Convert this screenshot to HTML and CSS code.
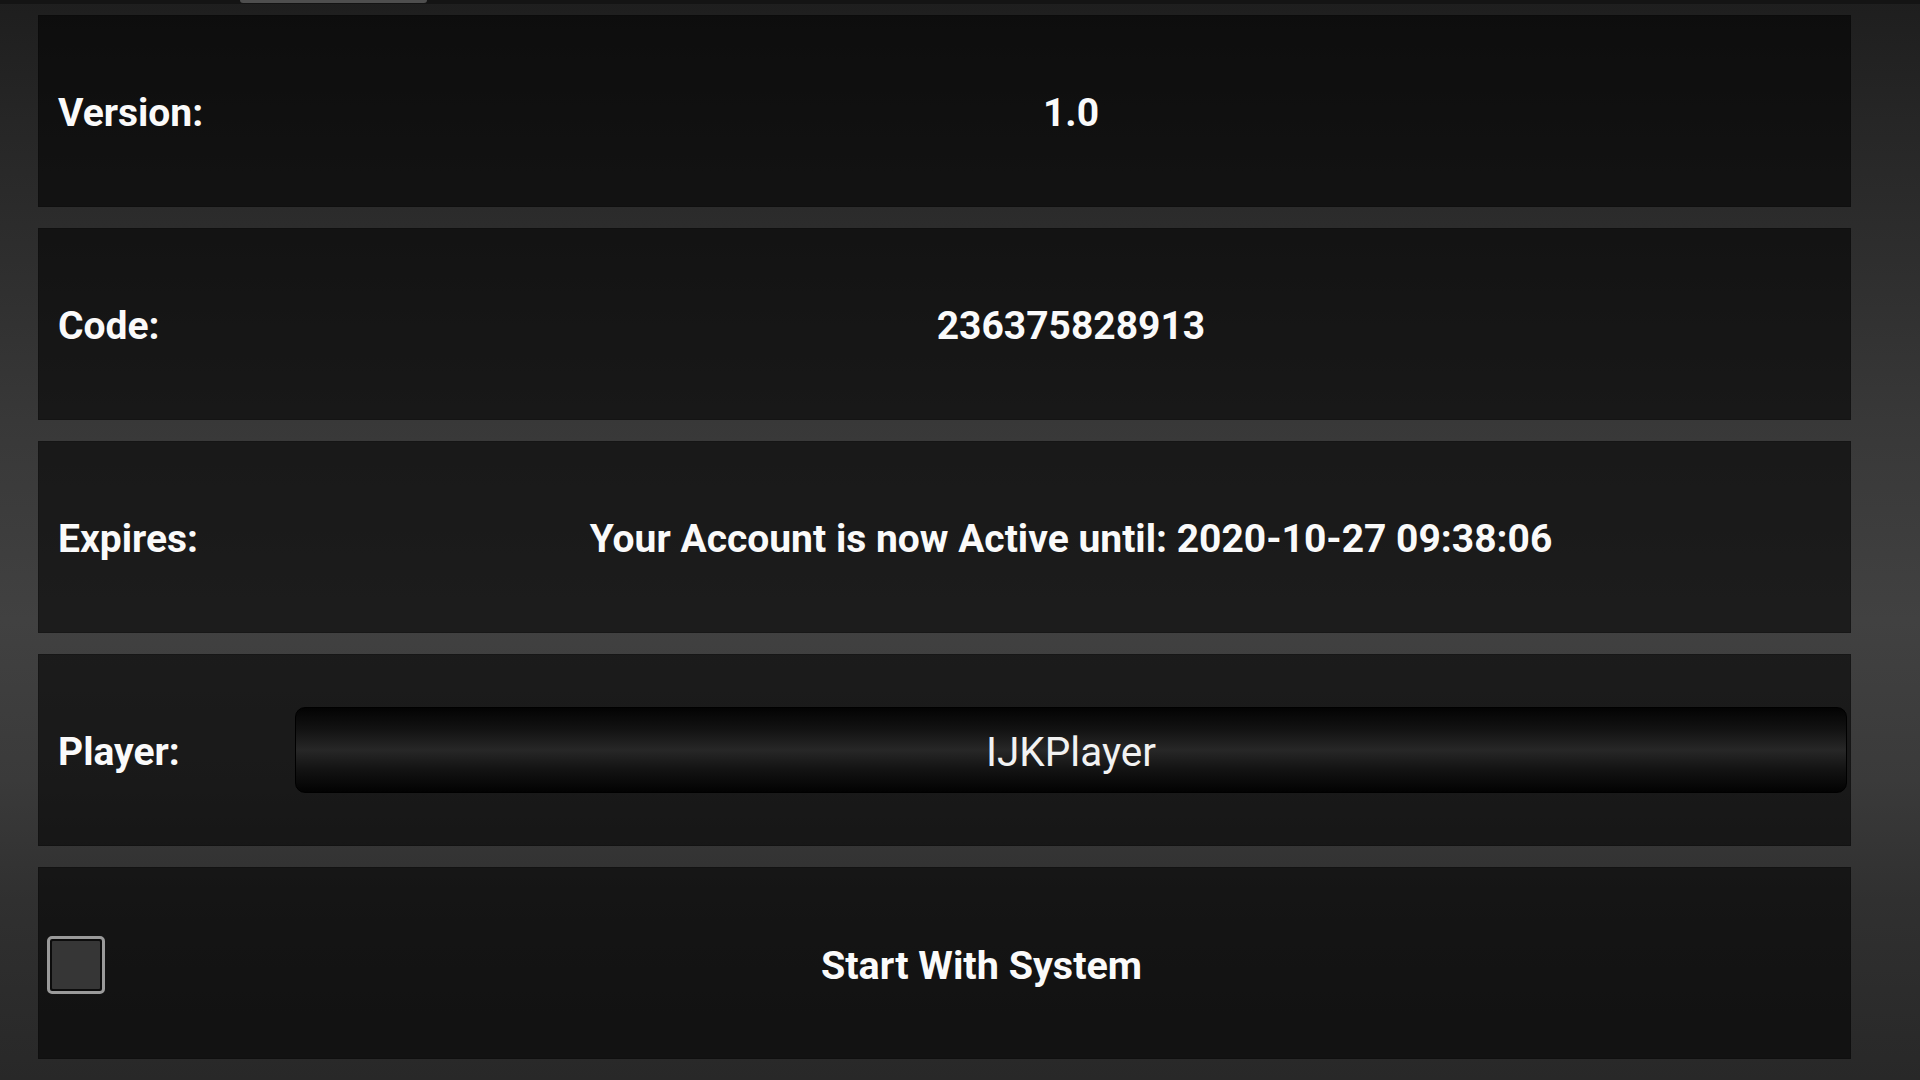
FILE: index.html
```
<!DOCTYPE html>
<html lang="en">
<head>
<meta charset="utf-8">
<title>Settings</title>
<link rel="stylesheet" href="styles.css">
</head>
<body>
<div class="topbar"><div class="tab"></div></div>
<main class="list">
  <section class="row">
    <div class="label">Version:</div>
    <div class="value">1.0</div>
  </section>
  <section class="row">
    <div class="label">Code:</div>
    <div class="value">236375828913</div>
  </section>
  <section class="row">
    <div class="label">Expires:</div>
    <div class="value">Your Account is now Active until: 2020-10-27 09:38:06</div>
  </section>
  <section class="row">
    <div class="label">Player:</div>
    <div class="value"><div class="select">IJKPlayer</div></div>
  </section>
  <section class="row row-check">
    <span class="checkbox"><span class="checkbox-inner"></span></span>
    <div class="check-label">Start With System</div>
  </section>
</main>
</body>
</html>
```
FILE: styles.css
```
html, body {
  margin: 0;
  padding: 0;
}
body {
  width: 1920px;
  height: 1080px;
  overflow: hidden;
  font-family: Roboto, "Liberation Sans", sans-serif;
  color: #fafafa;
  background: linear-gradient(to bottom,
    #1e1e1e 0px,
    #262626 120px,
    #2e2e2e 260px,
    #383838 420px,
    #414141 620px,
    #3a3a3a 780px,
    #303030 900px,
    #282828 1080px);
}
.topbar {
  height: 4px;
  background: #141414;
  display: flex;
}
.tab {
  margin-left: 240px;
  width: 187px;
  height: 3px;
  background: #4e4e4e;
  border-radius: 0 0 3px 3px;
}
.list {
  display: flex;
  flex-direction: column;
  gap: 21px;
  padding: 11px 69px 0 38px;
}
.row {
  height: 192px;
  box-sizing: border-box;
  padding-top: 4px;
  display: flex;
  align-items: center;
  background: rgba(0, 0, 0, 0.56);
  box-shadow: inset 0 0 0 1px rgba(0, 0, 0, 0.15);
}
.label {
  width: 257px;
  box-sizing: border-box;
  padding-left: 20px;
  font-size: 39px;
  font-weight: 700;
  flex: none;
}
.value {
  flex: 1;
  padding-right: 4px;
  text-align: center;
  font-size: 39px;
  font-weight: 700;
}
.select {
  height: 86px;
  box-sizing: border-box;
  margin-top: -4px;
  border: 1px solid #000;
  border-radius: 10px;
  display: flex;
  align-items: center;
  justify-content: center;
  padding-top: 4px;
  font-size: 40.5px;
  font-weight: 400;
  color: #f2f2f2;
  background: linear-gradient(to bottom,
    #030303 0%,
    #121212 25%,
    #272727 50%,
    #141414 72%,
    #020202 100%);
}
.row-check {
  padding-left: 9px;
}
.checkbox {
  width: 58px;
  height: 58px;
  box-sizing: border-box;
  border: 3px solid #9a9a9a;
  border-radius: 5px;
  padding: 2px;
  background: #0c0c0c;
  flex: none;
  display: flex;
}
.checkbox-inner {
  flex: 1;
  background: #363636;
  border-radius: 1px;
}
.check-label {
  flex: 1;
  margin-left: 7px;
  text-align: center;
  font-size: 39.5px;
  font-weight: 700;
}
```
